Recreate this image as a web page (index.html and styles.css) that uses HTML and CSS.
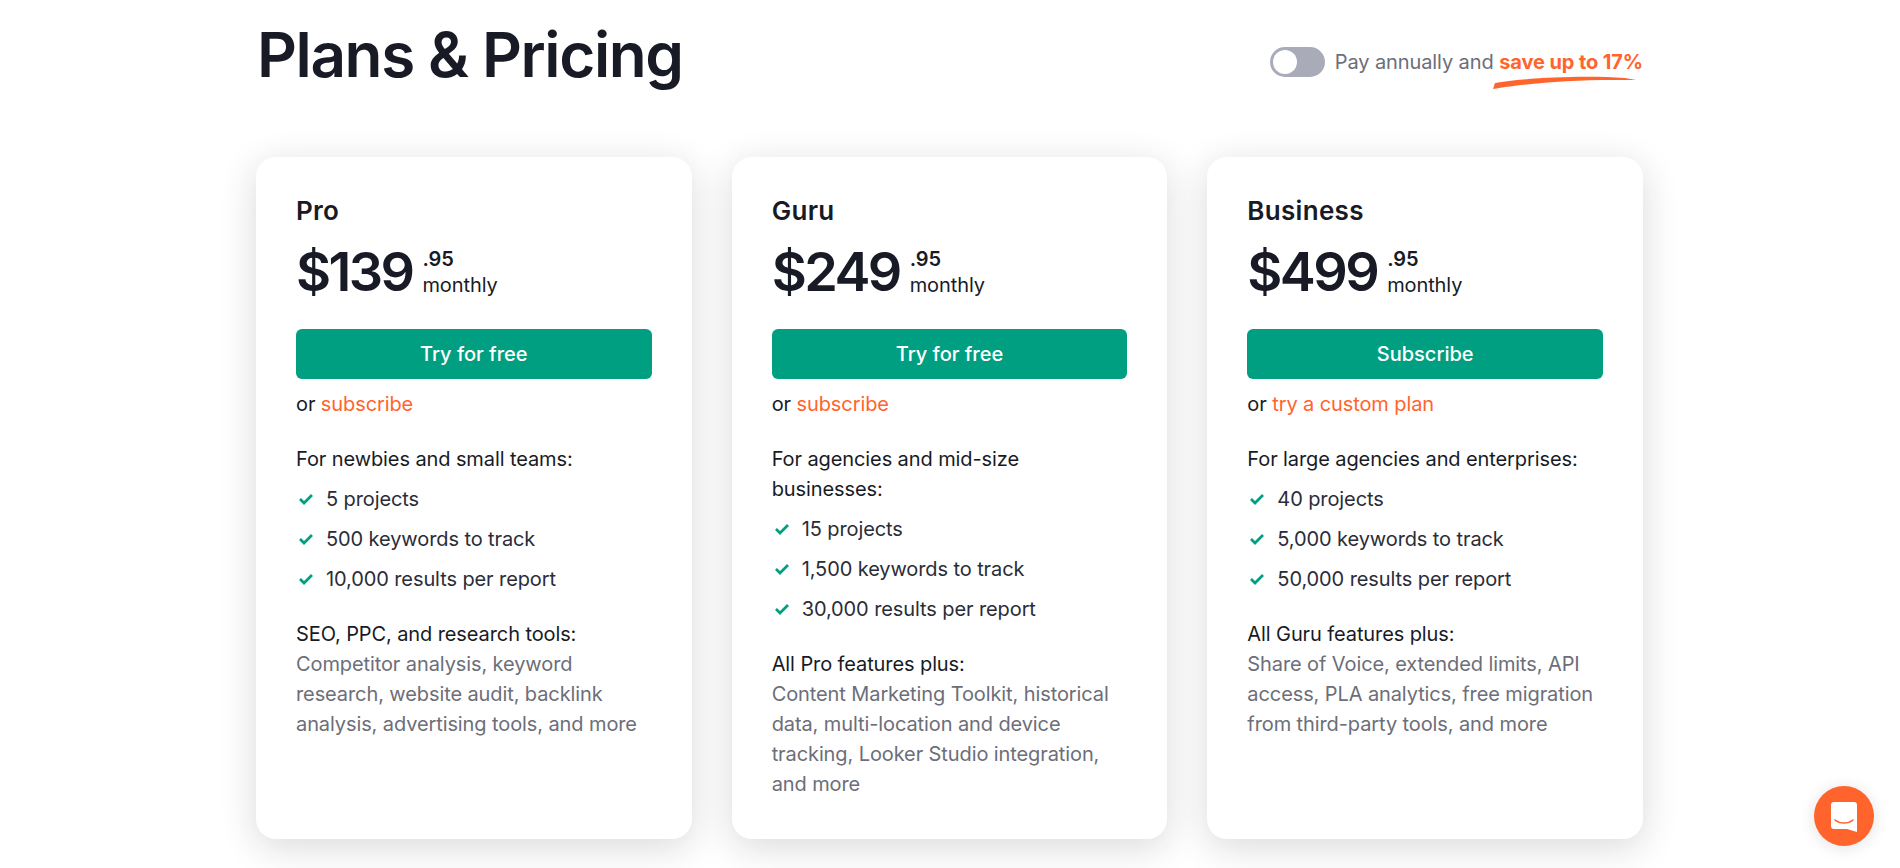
FILE: index.html
```html
<!DOCTYPE html>
<html lang="en">
<head>
<meta charset="UTF-8">
<meta name="viewport" content="width=device-width, initial-scale=1.0">
<title>Plans &amp; Pricing</title>
<link rel="stylesheet" href="styles.css">
</head>
<body>
<div class="container">
    <div class="top">
        <h1>Plans &amp; Pricing</h1>
        <div class="billing">
            <span class="toggle"><span class="thumb"></span></span>
            <span>Pay annually and <span class="save">save up to 17%
                <svg class="swoosh" viewBox="0 0 143 13" preserveAspectRatio="none"><path d="M0 13 L2 7 C30 2 90 -1 132 2 L143 4 L120 4 C80 4 40 7 12 11 Z"/></svg>
            </span></span>
        </div>
    </div>

    <div class="cards">
        <div class="card">
            <h2>Pro</h2>
            <div class="price"><span class="amount">$139</span><span class="cents"><b>.95</b>monthly</span></div>
            <button type="button">Try for free</button>
            <p class="alt">or <a href="#">subscribe</a></p>
            <p class="for">For newbies and small teams:</p>
            <ul>
                <li><svg viewBox="0 0 16 16"><path d="M2 8 L6 12 L14 4"/></svg>5 projects</li>
                <li><svg viewBox="0 0 16 16"><path d="M2 8 L6 12 L14 4"/></svg>500 keywords to track</li>
                <li><svg viewBox="0 0 16 16"><path d="M2 8 L6 12 L14 4"/></svg>10,000 results per report</li>
            </ul>
            <p class="for">SEO, PPC, and research tools:</p>
            <p class="features">Competitor analysis, keyword research, website audit, backlink analysis, advertising tools, and more</p>
        </div>

        <div class="card">
            <h2>Guru</h2>
            <div class="price"><span class="amount">$249</span><span class="cents"><b>.95</b>monthly</span></div>
            <button type="button">Try for free</button>
            <p class="alt">or <a href="#">subscribe</a></p>
            <p class="for">For agencies and mid-size businesses:</p>
            <ul>
                <li><svg viewBox="0 0 16 16"><path d="M2 8 L6 12 L14 4"/></svg>15 projects</li>
                <li><svg viewBox="0 0 16 16"><path d="M2 8 L6 12 L14 4"/></svg>1,500 keywords to track</li>
                <li><svg viewBox="0 0 16 16"><path d="M2 8 L6 12 L14 4"/></svg>30,000 results per report</li>
            </ul>
            <p class="for">All Pro features plus:</p>
            <p class="features">Content Marketing Toolkit, historical data, multi-location and device tracking, Looker Studio integration, and more</p>
        </div>

        <div class="card">
            <h2>Business</h2>
            <div class="price"><span class="amount">$499</span><span class="cents"><b>.95</b>monthly</span></div>
            <button type="button">Subscribe</button>
            <p class="alt">or <a href="#">try a custom plan</a></p>
            <p class="for">For large agencies and enterprises:</p>
            <ul>
                <li><svg viewBox="0 0 16 16"><path d="M2 8 L6 12 L14 4"/></svg>40 projects</li>
                <li><svg viewBox="0 0 16 16"><path d="M2 8 L6 12 L14 4"/></svg>5,000 keywords to track</li>
                <li><svg viewBox="0 0 16 16"><path d="M2 8 L6 12 L14 4"/></svg>50,000 results per report</li>
            </ul>
            <p class="for">All Guru features plus:</p>
            <p class="features">Share of Voice, extended limits, API access, PLA analytics, free migration from third-party tools, and more</p>
        </div>
    </div>
</div>

<div class="chat">
    <svg viewBox="0 0 26 30"><path d="M3 0 H23 A3 3 0 0 1 26 3 V30 L16 27 H3 A3 3 0 0 1 0 24 V3 A3 3 0 0 1 3 0 Z"/><path class="smile" d="M4 18 C9 22 17 22 22 18"/></svg>
</div>
</body>
</html>
```

FILE: styles.css
```css
/* Global styles */
html, body {
    height: 100%;
}
body {
    margin: 0;
    overflow: hidden;
    background-color: #fff;
    color: #181b25;
    font-family: Inter, "Liberation Sans", sans-serif;
    font-size: 20px;
    letter-spacing: -0.1px;
}
.container {
    width: 1387px;
    margin-left: 256px;
}

/* Heading row */
.top {
    display: flex;
    justify-content: space-between;
    align-items: center;
    height: 110px;
}
h1 {
    margin: 0 0 0 1px;
    font-size: 62px;
    font-weight: 600;
    letter-spacing: -1.4px;
    line-height: 110px;
}
.billing {
    display: flex;
    align-items: center;
    gap: 10px;
    color: #6c6e79;
    line-height: 30px;
    margin-top: 14px;
}
.toggle {
    display: flex;
    width: 55px;
    height: 30px;
    padding: 3px;
    box-sizing: border-box;
    border-radius: 15px;
    background-color: #a9acb8;
}
.thumb {
    width: 24px;
    height: 24px;
    border-radius: 50%;
    background-color: #fff;
}
.save {
    position: relative;
    color: #ff642d;
    font-weight: 700;
}
.swoosh {
    position: absolute;
    left: -6px;
    top: 26px;
    width: 143px;
    height: 13px;
    fill: #ff642d;
}

/* Cards */
.cards {
    display: flex;
    gap: 40px;
    margin-top: 47px;
}
.card {
    flex: 1;
    height: 682px;
    padding: 40px;
    box-sizing: border-box;
    background-color: #fff;
    border-radius: 20px;
    box-shadow: 0 8px 36px rgba(25, 27, 35, 0.16);
}
h2 {
    margin: 0;
    font-size: 26px;
    font-weight: 600;
    letter-spacing: 0.3px;
    line-height: 28px;
}
.price {
    display: flex;
    align-items: center;
    gap: 10px;
    height: 66px;
    margin-top: 14px;
}
.amount {
    font-size: 54px;
    font-weight: 600;
    letter-spacing: -2.6px;
    line-height: 66px;
}
.cents {
    display: flex;
    flex-direction: column;
    line-height: 26px;
}
.cents b {
    font-weight: 600;
}
button {
    display: block;
    width: 100%;
    height: 50px;
    margin-top: 24px;
    border: 0;
    border-radius: 6px;
    background-color: #009f81;
    color: #fff;
    font-family: inherit;
    font-size: 20px;
    font-weight: 500;
}
.alt {
    margin: 10px 0 0;
    line-height: 30px;
}
.alt a {
    color: #ff642d;
    text-decoration: none;
}
.for {
    margin: 25px 0 0;
    line-height: 30px;
}
ul {
    list-style: none;
    margin: 5px 0 0;
    padding: 0;
}
li {
    display: flex;
    align-items: center;
    gap: 12px;
    height: 40px;
    color: #2a2d38;
}
li svg {
    width: 16px;
    height: 16px;
    margin-left: 2px;
    fill: none;
    stroke: #009f81;
    stroke-width: 2.7;
}
ul + .for {
    margin-top: 20px;
}
.features {
    margin: 0;
    color: #6c6e79;
    line-height: 30px;
}

/* Chat bubble */
.chat {
    position: fixed;
    left: 1814px;
    top: 786px;
    display: flex;
    align-items: center;
    justify-content: center;
    width: 60px;
    height: 60px;
    border-radius: 50%;
    background-color: #ff642d;
    box-shadow: 0 2px 16px rgba(25, 27, 35, 0.12);
}
.chat svg {
    width: 26px;
    height: 30px;
    margin-top: 2px;
    fill: #fff;
}
.chat .smile {
    fill: none;
    stroke: #ff642d;
    stroke-width: 1.6;
    stroke-linecap: round;
}
```
